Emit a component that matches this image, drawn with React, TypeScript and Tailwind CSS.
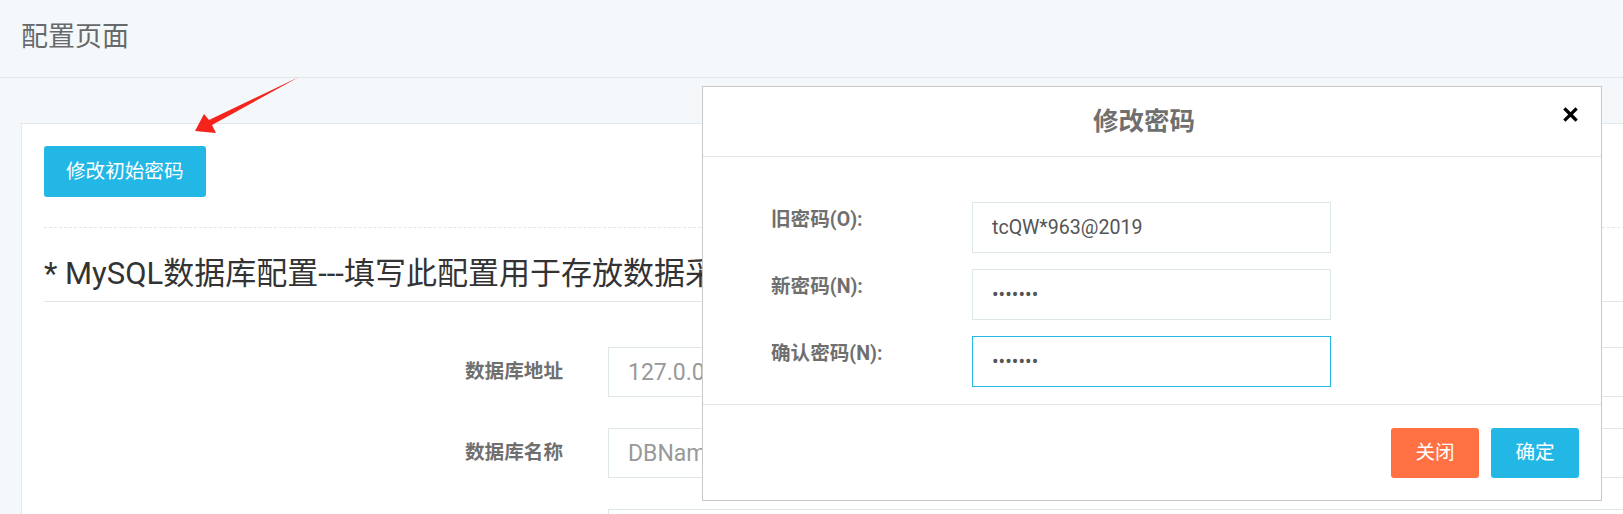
import { useState } from "react";

const font = "font-['Roboto','Noto_Sans_CJK_SC',sans-serif]";

const dbRows = [
  { label: "数据库地址", value: "127.0.0.1" },
  { label: "数据库名称", value: "DBName" },
  { label: "", value: "" },
];

const CloseIcon = () => (
  <svg width="15" height="15" viewBox="0 0 15 15">
    <path d="M2.5 2.5 L12.5 12.5 M12.5 2.5 L2.5 12.5" stroke="#000" strokeWidth="3.2" strokeLinecap="square" />
  </svg>
);

const PasswordModal = ({ onClose }: { onClose: () => void }) => {
  const [oldPwd, setOldPwd] = useState("tcQW*963@2019");
  const [newPwd, setNewPwd] = useState("1234567");
  const [confirmPwd, setConfirmPwd] = useState("1234567");

  const fields = [
    { label: "旧密码(O):", value: oldPwd, set: setOldPwd, type: "text", focus: false },
    { label: "新密码(N):", value: newPwd, set: setNewPwd, type: "password", focus: false },
    { label: "确认密码(N):", value: confirmPwd, set: setConfirmPwd, type: "password", focus: true },
  ];

  return (
    <div className="absolute left-[702px] top-[86px] w-[900px] border border-[#c8c8c8] bg-white">
      {/* header */}
      <div className="relative flex h-[70px] items-center justify-center border-b border-[#e5e5e5]">
        <h4 className="pr-[16px] text-[25.5px] font-bold text-[#6f6f6f]">修改密码</h4>
        <button onClick={onClose} className="absolute right-[23px] top-[20px]">
          <CloseIcon />
        </button>
      </div>

      {/* body */}
      <div className="flex flex-col gap-[16px] pb-[17px] pl-[68px] pt-[45px]">
        {fields.map((f) => (
          <div key={f.label} className="flex items-start">
            <label className="w-[201px] pt-[4px] text-[19.6px] font-bold leading-[28px] text-[#6f6f6f]">
              {f.label}
            </label>
            <input
              type={f.type}
              value={f.value}
              onChange={(e) => f.set(e.target.value)}
              className={`h-[51px] w-[359px] border bg-white pl-[19px] text-[19.6px] text-[#555] outline-none ${
                f.focus ? "border-[#23b7e5]" : "border-[#dde6e9]"
              }`}
            />
          </div>
        ))}
      </div>

      {/* footer */}
      <div className="flex justify-end gap-[12px] border-t border-[#e5e5e5] pb-[22px] pr-[22px] pt-[23px]">
        <button
          onClick={onClose}
          className="h-[50px] w-[88px] rounded-[3px] bg-[#ff7043] text-[19.6px] text-white"
        >
          关闭
        </button>
        <button className="h-[50px] w-[88px] rounded-[3px] bg-[#23b7e5] text-[19.6px] text-white">
          确定
        </button>
      </div>
    </div>
  );
};

const App = () => {
  const [showModal, setShowModal] = useState(true);

  return (
    <div className={`relative h-[514px] w-full overflow-hidden bg-[#f5f8fa] ${font}`}>
      <div className="flex h-[78px] items-center border-b border-[#e3e7ea] pl-[21px]">
        <h1 className="pb-[2px] text-[27px] text-[#676a6c]">配置页面</h1>
      </div>

      <div className="pl-[21px] pt-[45px]">
        <div className="mr-[-60px] border border-[#e4e8eb] bg-white px-[22px] pt-[22px]">
          <button
            onClick={() => setShowModal(true)}
            className="h-[51px] rounded-[3px] bg-[#23b7e5] px-[22px] text-[19.6px] text-white"
          >
            修改初始密码
          </button>

          <div className="mt-[30px] border-t border-dashed border-[#e5e5e5]" />

          <h3 className="whitespace-nowrap border-b border-[#e5e5e5] pb-[9px] pt-[28px] text-[31px] leading-[36px] text-[#333]">
            * MySQL数据库配置---填写此配置用于存放数据采集的数据
          </h3>

          <div className="mt-[45px] flex flex-col gap-[31px]">
            {dbRows.map((r, i) => (
              <div key={i} className="flex items-center">
                <label className="w-[519px] text-right text-[19.6px] font-bold text-[#6f6f6f]">{r.label}</label>
                <input
                  defaultValue={r.value}
                  className="ml-[45px] h-[50px] flex-1 border border-[#dde6e9] pl-[19px] text-[23px] text-[#999] outline-none"
                />
              </div>
            ))}
          </div>
        </div>
      </div>

      {/* red arrow annotation */}
      <svg className="pointer-events-none absolute left-0 top-0" width="320" height="150">
        <polygon points="195,131 204,114 209,120 299,77 212,125 216,133" fill="#f4231b" />
      </svg>

      {showModal && <PasswordModal onClose={() => setShowModal(false)} />}
    </div>
  );
};

export default App;
